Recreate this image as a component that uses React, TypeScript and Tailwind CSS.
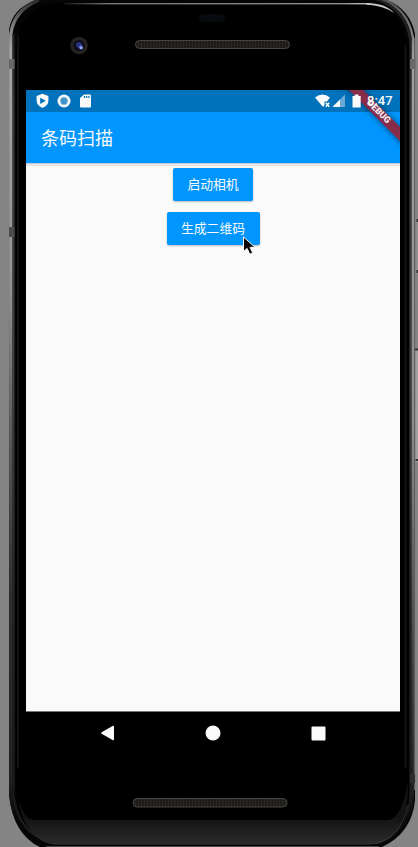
function PhoneBody() {
  return (
    <svg className="absolute inset-0" width="418" height="847" viewBox="0 0 418 847" aria-hidden="true">
      <defs>
        <linearGradient id="rim" gradientUnits="userSpaceOnUse" x1="0" y1="0" x2="0" y2="847">
          <stop offset="0" stopColor="#2c2c2c" />
          <stop offset=".03" stopColor="#7d7d7d" />
          <stop offset=".06" stopColor="#a6a8a6" />
          <stop offset=".34" stopColor="#939593" />
          <stop offset=".5" stopColor="#5e5e5e" />
          <stop offset=".7" stopColor="#303030" />
          <stop offset=".92" stopColor="#222" />
          <stop offset=".97" stopColor="#050505" />
        </linearGradient>
        <linearGradient id="rimInner" gradientUnits="userSpaceOnUse" x1="0" y1="30" x2="0" y2="820">
          <stop offset="0" stopColor="#222" />
          <stop offset=".1" stopColor="#3b3b3b" />
          <stop offset=".45" stopColor="#404040" />
          <stop offset=".75" stopColor="#262626" />
          <stop offset="1" stopColor="#1c1c1c" />
        </linearGradient>
        <linearGradient id="rimRight" gradientUnits="userSpaceOnUse" x1="0" y1="0" x2="0" y2="847">
          <stop offset="0" stopColor="#555" />
          <stop offset=".07" stopColor="#a0a0a0" />
          <stop offset=".5" stopColor="#8c8c8c" />
          <stop offset=".75" stopColor="#4c4c4c" />
          <stop offset=".92" stopColor="#282828" />
          <stop offset=".97" stopColor="#080808" />
        </linearGradient>
        <linearGradient id="topLine" gradientUnits="userSpaceOnUse" x1="62" y1="0" x2="372" y2="0">
          <stop offset="0" stopColor="#111" />
          <stop offset=".15" stopColor="#777" />
          <stop offset=".9" stopColor="#8b908d" />
          <stop offset="1" stopColor="#ccc" />
        </linearGradient>
        <linearGradient id="chin" gradientUnits="userSpaceOnUse" x1="0" y1="818" x2="0" y2="844">
          <stop offset="0" stopColor="#131313" />
          <stop offset="1" stopColor="#2b2b2b" />
        </linearGradient>
        <pattern id="mesh" width="3" height="12" patternUnits="userSpaceOnUse">
          <rect width="3" height="12" fill="#1d1b19" />
          <rect width="1.2" height="12" fill="#2b2824" />
        </pattern>
      </defs>
      <rect width="418" height="847" fill="#848484" />
      <path d="M9 30Q12 8 38-1H384Q410 8 415 34V800Q412 833 382 847H40Q14 835 9 795Z" fill="#050505" />
      <path d="M39 0Q14 10 10.8 34V795Q14 831 40 845" fill="none" stroke="url(#rim)" strokeWidth="3.4" />
      <path d="M13.5 34V796Q18 828 40 838" stroke="url(#rimInner)" strokeWidth="2" fill="none" />
      <path d="M376-1Q406 8 410.7 42V795Q406 830 386 841" fill="none" stroke="url(#rimInner)" strokeWidth="2.4" />
      <path d="M382-1Q408 9 413 38V795Q410 832 380 845" fill="none" stroke="url(#rimRight)" strokeWidth="2.4" />
      <path d="M414.7 38V790" stroke="#717171" strokeWidth="1" />
      <path d="M409 50V800Q406 838 372 841H55Q20 837 16 795V50Q19 8 52 3H373Q402 8 409 50Z" fill="#000" />
      <path d="M18 35V768M405.5 45V768" stroke="#161616" strokeWidth="1.5" fill="none" />
      <path d="M16 780Q19 819 34 820H388Q402 818 408 782Q409 835 378 844H50Q19 836 16 780Z" fill="url(#chin)" />
      <path d="M52 844H372Q400 840 408 805" fill="none" stroke="#353535" />
      <path d="M46 846.5H379" stroke="#484848" />
      <rect x="64" y="3" width="306" height="1.4" fill="url(#topLine)" />
      <path d="M366 3Q386 3.2 394 13Q384 5.5 366 4.4Z" fill="#c7c9c7" />
      <rect x="9" y="59" width="5.5" height="10" fill="#686868" />
      <rect x="9" y="227" width="5.5" height="10" fill="#4c4c4c" />
      <rect x="410" y="59" width="5.5" height="10" fill="#686868" />
      <rect x="410" y="774" width="5" height="9" fill="#2d2d2d" />
      <rect x="416.5" y="221" width="2" height="52" fill="#939393" />
      <path d="M416.5 220.5h2M416.5 271.5h2" stroke="#333" strokeWidth="3" />
      <rect x="415.5" y="350" width="3" height="112" fill="#a0a0a0" />
      <path d="M415 349.5h3M415.5 460h3" stroke="#333" strokeWidth="2" />
      <rect x="199" y="14" width="26" height="8" rx="4" fill="#070b10" />
      <circle cx="79" cy="45.5" r="8.7" fill="#262423" />
      <circle cx="79" cy="45.5" r="5.5" fill="#0d0d16" />
      <circle cx="79" cy="45" r="3" fill="#25317d" />
      <circle cx="81" cy="47.5" r="2" fill="#6c83e8" />
      <circle cx="81" cy="48" r=".8" fill="#d2dcff" />
      <rect x="135.5" y="40.5" width="154" height="8" rx="4" fill="url(#mesh)" stroke="#464646" />
      <rect x="133" y="798.5" width="154" height="8.5" rx="4" fill="url(#mesh)" stroke="#464646" />
    </svg>
  );
}

function StatusBar() {
  return (
    <div className="flex h-[22px] shrink-0 items-center bg-[#0072bc] pl-[10px] pr-[7px] text-[#fafafa]">
      <svg width="13" height="16" viewBox="0 0 13 16" aria-label="安全">
        <path d="M6.5 .7 12.4 3V7.5Q12.4 12.5 6.5 15Q.6 12.5.6 7.5V3Z" fill="currentColor" />
        <path d="m4.2 4.7 5.6 3.1-5.6 3.1Z" fill="#0072bc" />
      </svg>
      <svg className="ml-[8px]" width="14" height="14" viewBox="0 0 14 14" aria-hidden="true">
        <circle cx="7" cy="7" r="6.5" fill="#fafafa" />
        <circle cx="7" cy="7" r="4.2" fill="#9cc6e3" />
        <circle cx="7" cy="7" r="3.2" fill="#3f94ca" />
      </svg>
      <svg className="ml-[9px]" width="12" height="14" viewBox="0 0 12 14" aria-hidden="true">
        <path d="M4 .5H10q1 0 1 1v11q0 1-1 1H1q-1 0-1-1V4Z" fill="currentColor" />
        <path d="M4.5 2v2M6.7 2v2M8.9 2v2" stroke="#0072bc" strokeWidth="1.2" />
      </svg>
      <svg className="relative z-20 ml-auto" width="47" height="14" viewBox="0 0 47 14" aria-hidden="true">
        <path d="M0 3.5Q7.5-2.5 15 3.5L12 7.5H9.5V11L8 13Z" fill="currentColor" />
        <path d="m10.8 8.8 3.4 4m0-4-3.4 4" stroke="currentColor" strokeWidth="1.5" />
        <path d="m30 .5-12.5 12.5H30Z" fill="#6aa9d5" />
        <path d="M25 5.5 17.5 13H25Z" fill="currentColor" />
        <path d="M37.5 2h2.2V.5h3.8V2h2.2V13.5h-8.2Z" fill="currentColor" />
      </svg>
      <span className="relative z-20 ml-[5px] w-[26px] whitespace-nowrap text-[13px] font-medium leading-[22px] [font-family:Roboto,sans-serif]">8:47</span>
    </div>
  );
}

function DebugBanner() {
  return (
    <div className="pointer-events-none absolute right-0 top-0 z-10 h-[64px] w-[64px] overflow-hidden">
      <div className="absolute left-[-2px] top-[17px] flex h-[10px] w-[88px] rotate-45 items-center justify-center bg-[#872c49] pl-[1px] text-[9px] font-black text-[#f4eaf0] shadow-[0_0_6px_#0008] [font-family:Roboto,sans-serif]">
        DEBUG
      </div>
    </div>
  );
}

const buttonStyle =
  "h-[33px] rounded-[2px] bg-[#0096fd] pb-[2px] text-[12.8px] leading-[31px] text-[#fafafa] shadow-[0_1px_2px_#0004]";

export default function App() {
  return (
    <main className="relative h-[847px] w-[418px] overflow-hidden bg-[#848484] pl-[26px] pt-[90px] [font-family:'Noto_Sans_CJK_SC',sans-serif]">
      <PhoneBody />
      <div className="relative w-[374px]">
        <section className="relative flex h-[622px] flex-col overflow-hidden border-b border-[#777] bg-[#fafafa]">
          <StatusBar />
          <header className="flex h-[51px] shrink-0 items-center bg-[#0096fd] pb-[2px] pl-[15px] shadow-[0_1px_0_#c4cfd6,0_3px_0_#e5e5e5]">
            <h1 className="text-[18px] leading-[26px] text-[#fafafa]">条码扫描</h1>
          </header>
          <div className="flex flex-col items-center gap-[11px] pt-[5px]">
            <button className={`${buttonStyle} w-[80px]`}>启动相机</button>
            <button className={`${buttonStyle} w-[93px]`}>生成二维码</button>
          </div>
          <DebugBanner />
        </section>
        <nav className="flex h-[42px] items-center justify-between px-[74px] text-[#fafafa]">
          <button aria-label="返回">
            <svg width="15" height="16" viewBox="0 0 15 16"><path d="M13 .8Q14 .7 14 2V14Q14 15.3 13 15.2L1.6 8.8q-.9-.8 0-1.5Z" fill="currentColor" /></svg>
          </button>
          <button aria-label="主页">
            <svg width="16" height="16" viewBox="0 0 16 16"><circle cx="8" cy="8" r="7.5" fill="currentColor" /></svg>
          </button>
          <button aria-label="概览">
            <svg width="15" height="15" viewBox="0 0 15 15"><rect x=".5" y=".5" width="14" height="14" rx="1" fill="currentColor" /></svg>
          </button>
        </nav>
      </div>
      <svg className="absolute left-[242px] top-[236px]" width="15" height="20" viewBox="0 0 15 20" aria-hidden="true">
        <path d="M1.5 1V15.6l3.6-3.2 2.6 5.8 3-1.3-2.6-5.6h5Z" fill="#050505" stroke="#fafafa" strokeWidth="1" />
      </svg>
    </main>
  );
}
